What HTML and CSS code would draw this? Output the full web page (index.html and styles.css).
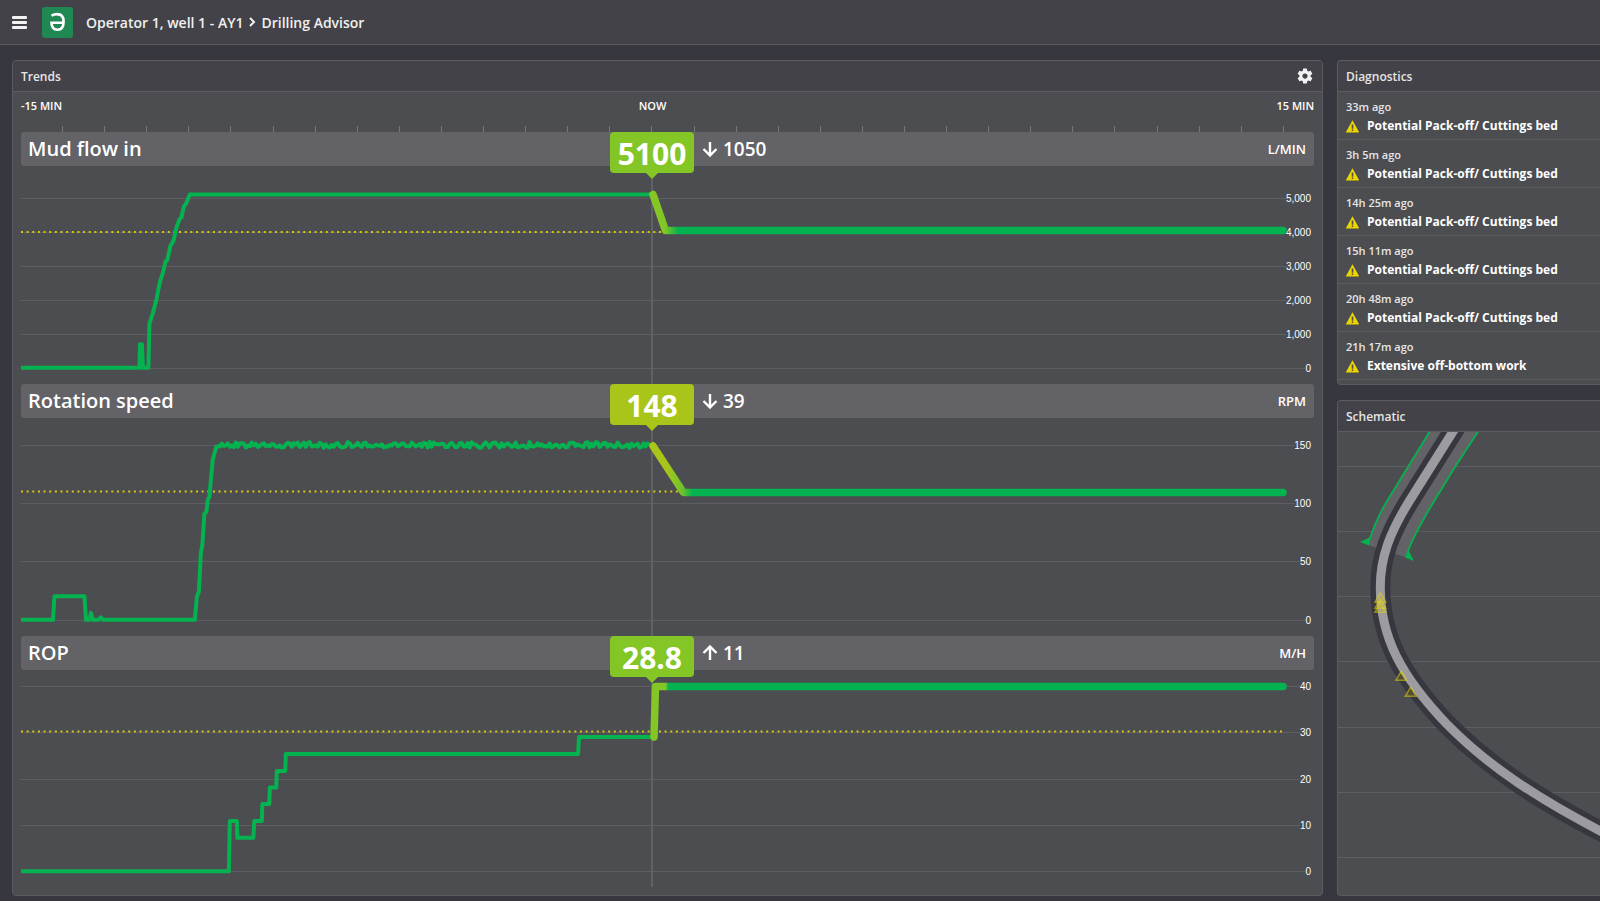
FILE: index.html
```html
<!DOCTYPE html>
<html lang="en">
<head>
<meta charset="utf-8">
<title>Drilling Advisor</title>
<link rel="stylesheet" href="styles.css">
</head>
<body>
<header class="topbar">
  <button class="menu" type="button" aria-label="Menu"><span></span><span></span><span></span></button>
  <svg class="logo" viewBox="0 0 31 31" aria-hidden="true">
    <rect width="31" height="31" rx="3"/>
    <path d="M9.500 8.600C11.500 7.500 13 7.100 15 7.100C19.300 7.100 21.600 9.900 21.600 14.500C21.600 19.900 19.400 22.700 15.400 22.700C11.600 22.700 9.500 20.300 9.500 15.700H21.500"/>
  </svg>
  <nav class="crumbs" aria-label="Breadcrumb">
    <span>Operator 1, well 1 - AY1</span>
    <svg class="chevron" viewBox="0 0 8 10" aria-hidden="true"><path d="M2 1L6 5L2 9"/></svg>
    <span>Drilling Advisor</span>
  </nav>
</header>
<main class="board">
  <section class="panel trends">
    <div class="panel-head">
      <h2>Trends</h2>
      <button class="gear" type="button" aria-label="Settings">
        <svg viewBox="0 0 24 24"><path d="M19.430 12.980c.04-.32.07-.64.07-.98s-.03-.66-.07-.98l2.110-1.650c.19-.15.24-.42.12-.64l-2-3.460c-.12-.22-.39-.3-.61-.22l-2.490 1c-.52-.4-1.080-.73-1.690-.98l-.38-2.650C14.460 2.180 14.250 2 14 2h-4c-.25 0-.46.18-.49.42l-.38 2.650c-.61.25-1.170.59-1.690.98l-2.490-1c-.23-.09-.49 0-.61.22l-2 3.460c-.13.22-.07.49.12.64l2.110 1.650c-.04.32-.07.65-.07.98s.03.66.07.98l-2.110 1.650c-.19.15-.24.42-.12.64l2 3.460c.12.22.39.3.61.22l2.490-1c.52.4 1.080.73 1.690.98l.38 2.650c.03.24.24.42.49.42h4c.25 0 .46-.18.49-.42l.38-2.650c.61-.25 1.170-.59 1.690-.98l2.490 1c.23.09.49 0 .61-.22l2-3.460c.12-.22.07-.49-.12-.64l-2.110-1.650zM12 15.500c-1.930 0-3.500-1.570-3.500-3.500s1.570-3.500 3.500-3.500 3.500 1.570 3.500 3.500-1.570 3.500-3.500 3.500z"/></svg>
      </button>
    </div>
    <div class="trends-body">
      <div class="timeline">
        <div class="time-labels"><span>-15 MIN</span><span class="now">NOW</span><span class="end">15 MIN</span></div>
        <div class="time-ticks" id="ticks"></div>
      </div>

      <section class="chart">
        <div class="bar">
          <h3>Mud flow in</h3>
          <div class="value lime">5100</div>
          <div class="delta"><svg viewBox="0 0 16 16" aria-hidden="true"><path d="M8 1V14M1.500 8L8 14.500L14.500 8"/></svg>1050</div>
          <div class="unit">L/MIN</div>
        </div>
        <div class="plot">
          <div class="grid grid-flow">
            <div><i></i>5,000</div><div><i></i>4,000</div><div><i></i>3,000</div><div><i></i>2,000</div><div><i></i>1,000</div><div><i></i>0</div>
          </div>
          <svg class="series" viewBox="0 0 1294 218" preserveAspectRatio="none">
            <defs><linearGradient id="g1" gradientUnits="userSpaceOnUse" x1="644" y1="0" x2="658" y2="0"><stop offset="0" stop-color="#84c626"/><stop offset="1" stop-color="#04b250"/></linearGradient></defs>
            <path class="nowline" d="M631.500 0V218"/>
            <path class="limit" d="M0 66H1263"/>
            <path class="past" d="M0 202H118.500L119 178.500H121L122 202H127.500L128.500 158L132 147L135.500 134L139 116L142 107L144.500 96L146.500 94L149.500 80L152.500 75L155.500 62L158.500 53.500L160.500 51.500L163 40.500L165 38L169 28.500H631"/>
            <path class="future" stroke="url(#g1)" d="M632.500 28.500L645 64.500H1263"/>
          </svg>
        </div>
      </section>

      <section class="chart">
        <div class="bar">
          <h3>Rotation speed</h3>
          <div class="value olive">148</div>
          <div class="delta"><svg viewBox="0 0 16 16" aria-hidden="true"><path d="M8 1V14M1.500 8L8 14.500L14.500 8"/></svg>39</div>
          <div class="unit">RPM</div>
        </div>
        <div class="plot">
          <div class="grid grid-rotation">
            <div><i></i>150</div><div><i></i>100</div><div><i></i>50</div><div><i></i>0</div>
          </div>
          <svg class="series" viewBox="0 0 1294 218" preserveAspectRatio="none">
            <defs><linearGradient id="g2" gradientUnits="userSpaceOnUse" x1="632" y1="0" x2="672" y2="0"><stop offset=".35" stop-color="#a9c51a"/><stop offset=".6" stop-color="#84c626"/><stop offset=".75" stop-color="#6cc22e"/><stop offset="1" stop-color="#04b250"/></linearGradient></defs>
            <path class="nowline" d="M631.500 0V218"/>
            <path class="limit" d="M0 73.500H1263"/>
            <path class="past" d="M0 202H32L33.500 178.500H63.500L65 202H68.500L70 195L72 202H78L80 199.500L82 202H174L176 179L178 174L180 135L181.500 127L183.500 96L185.500 94L187 82L188.500 79L190.500 57L192 41L194 34L196 27"/>
            <path class="past" id="jitter"/>
            <path class="future" stroke="url(#g2)" d="M632.500 28L663 74.500H1263"/>
          </svg>
        </div>
      </section>

      <section class="chart">
        <div class="bar">
          <h3>ROP</h3>
          <div class="value lime">28.8</div>
          <div class="delta"><svg viewBox="0 0 16 16" aria-hidden="true"><path d="M8 15V2M1.500 8L8 1.500L14.500 8"/></svg>11</div>
          <div class="unit">M/H</div>
        </div>
        <div class="plot">
          <div class="grid grid-rop">
            <div><i></i>40</div><div><i></i>30</div><div><i></i>20</div><div><i></i>10</div><div><i></i>0</div>
          </div>
          <svg class="series" viewBox="0 0 1294 218" preserveAspectRatio="none">
            <defs><linearGradient id="g3" gradientUnits="userSpaceOnUse" x1="645" y1="0" x2="648" y2="0"><stop offset="0" stop-color="#84c626"/><stop offset="1" stop-color="#04b250"/></linearGradient></defs>
            <path class="nowline" d="M631.500 0V218"/>
            <path class="limit" d="M0 61.500H1263"/>
            <path class="past" d="M0 201.500H208L209 151H216L216.500 168H232.500L233.500 151H241L241.500 134H248.500L249 117.500H255.500L256 101H264.500L265 84H557.500L558.500 67H631"/>
            <path class="future" stroke="url(#g3)" d="M633.500 67L635 16.500H1263"/>
          </svg>
        </div>
      </section>
    </div>
  </section>

  <aside class="side">
    <section class="panel">
      <div class="panel-head"><h2>Diagnostics</h2></div>
      <ul class="events">
        <li><time>33m ago</time><p><svg viewBox="0 0 13 13"><use href="#warn"/></svg>Potential Pack-off/ Cuttings bed</p></li>
        <li><time>3h 5m ago</time><p><svg viewBox="0 0 13 13"><use href="#warn"/></svg>Potential Pack-off/ Cuttings bed</p></li>
        <li><time>14h 25m ago</time><p><svg viewBox="0 0 13 13"><use href="#warn"/></svg>Potential Pack-off/ Cuttings bed</p></li>
        <li><time>15h 11m ago</time><p><svg viewBox="0 0 13 13"><use href="#warn"/></svg>Potential Pack-off/ Cuttings bed</p></li>
        <li><time>20h 48m ago</time><p><svg viewBox="0 0 13 13"><use href="#warn"/></svg>Potential Pack-off/ Cuttings bed</p></li>
        <li><time>21h 17m ago</time><p><svg viewBox="0 0 13 13"><use href="#warn"/></svg>Extensive off-bottom work</p></li>
      </ul>
    </section>
    <section class="panel schematic">
      <div class="panel-head"><h2>Schematic</h2></div>
      <svg class="well" role="img" aria-label="Well path">
        <defs>
          <g id="warn"><path fill="#ecd602" d="M6.500 .3L13 12V12.600H0V12Z"/><path fill="#4c4d51" d="M5.700 4.500H7.300V8.700H5.700ZM5.700 9.500H7.300V11H5.700Z"/></g>
          <path id="mark" d="M0 1L5.400 10.200H-5.400Z"/>
        </defs>
        <path class="depth" d="M0 34.500H2000M0 99.500H2000M0 164.500H2000M0 229.500H2000M0 295.500H2000M0 360.500H2000M0 425.500H2000"/>
        <path class="casing" d="M91.500 0L70 35L49 69C39 85 35 96 30.500 113L68 125.500C72 113 77 102 92 76L117 35L140 0Z"/>
        <path class="steel" d="M92 -1L70 35L49 69C40 84 36 94 31 109M140.500 -1L117 35L92 76C78 100 73 110 69 122"/>
        <path class="foot" d="M32.500 105L22 110L31 113.500ZM70.500 118L76 129L67 125.500Z"/>
        <path class="hole" d="M118.500 -6L72 68C52 100 42.300 125 42.300 155C42.300 205 63 244 108.700 292C150 334 200 367 270 403"/>
        <path class="pipe" d="M118.500 -6L72 68C52 100 42.300 125 42.300 155C42.300 205 63 244 108.700 292C150 334 200 367 270 403"/>
        <g class="marks">
          <use href="#mark" x="42.300" y="160"/><use href="#mark" x="42.300" y="166"/><use href="#mark" x="42.300" y="170"/>
          <use href="#mark" x="63.300" y="238"/><use href="#mark" x="72.700" y="254"/>
        </g>
      </svg>
    </section>
  </aside>
</main>
<script src="script.js"></script>
</body>
</html>
```
FILE: script.js
```js
// One tick per minute on the timeline.
document.getElementById('ticks').innerHTML = '<span></span>'.repeat(30);

// Measured rotation speed wobbles around 150 rpm.
let seed = 7;
let d = 'M196 27';
for (let x = 197; x < 631; x += 2) {
  seed = (seed * 16807) % 2147483647;
  d += 'L' + x + ' ' + (24 + (seed % 1000) / 1000 * 6).toFixed(1);
}
document.getElementById('jitter').setAttribute('d', d);
```
FILE: styles.css
```css
* { box-sizing: border-box; }
body {
  margin: 0;
  min-height: 100vh;
  display: flex;
  flex-direction: column;
  background: #37373f;
  color: #fff;
  font-family: "Open Sans", "Noto Sans", sans-serif;
  font-weight: 600;
  overflow-x: hidden;
}
h2, h3, p, ul { margin: 0; padding: 0; font-weight: 600; }
button { border: 0; padding: 0; background: none; color: inherit; cursor: pointer; }

.topbar {
  display: flex;
  align-items: center;
  height: 45px;
  padding: 0 12px;
  background: #424248;
  border-bottom: 1px solid #5b5b60;
}
.menu { display: flex; flex-direction: column; gap: 2px; width: 15px; }
.menu span { height: 3px; background: #f2f2f2; border-radius: 1px; }
.logo { width: 31px; height: 31px; margin: 0 13px 0 15px; }
.logo rect { fill: #1f8853; }
.logo path { fill: none; stroke: #fff; stroke-width: 2.6; }
.crumbs { display: flex; align-items: center; font-size: 14px; color: #f0f0f0; }
.chevron { width: 8px; height: 10px; margin: 0 5px; }
.chevron path { fill: none; stroke: #f0f0f0; stroke-width: 2; }

.board {
  flex: 1;
  display: grid;
  grid-template-columns: minmax(0, 1fr) 263px;
  gap: 14px;
  padding: 15px 0 6px 12px;
}
.panel {
  display: flex;
  flex-direction: column;
  background: #4c4d51;
  border: 1px solid #5b5b60;
  border-radius: 4px;
  overflow: hidden;
}
.panel-head {
  display: flex;
  align-items: center;
  justify-content: space-between;
  height: 31px;
  padding: 0 8px;
  background: #424248;
  border-bottom: 1px solid #5b5b60;
}
.panel-head h2 { padding-top: 2px; font-size: 12px; line-height: 16px; color: #e6e6e6; }
.gear, .gear svg { display: block; width: 18px; height: 18px; }
.gear path { fill: #f2f2f2; }

.trends-body { flex: 1; display: flex; flex-direction: column; padding: 0 8px 8px; }
.timeline { height: 40px; display: flex; flex-direction: column; justify-content: space-between; }
.time-labels {
  display: grid;
  grid-template-columns: 1fr 84px 1fr 30px;
  padding-top: 6px;
  font-size: 11px;
  line-height: 16px;
}
.now { text-align: center; }
.end { grid-column: 3 / 5; text-align: right; }
.time-ticks { display: flex; height: 6px; padding-right: 30px; }
.time-ticks span { flex: 1; border-right: 1px solid #77777b; }

.chart { flex: 1; display: flex; flex-direction: column; }
.bar {
  display: grid;
  grid-template: 34px / 1fr 84px 1fr 31px;
  align-items: center;
  height: 34px;
  background: #636267;
  border-radius: 3px;
}
.bar > * { grid-row: 1; }
.bar h3 { grid-column: 1; padding-left: 7px; font-size: 20px; line-height: 28px; }
.value {
  grid-column: 2;
  align-self: start;
  position: relative;
  z-index: 1;
  height: 41px;
  border-radius: 4px;
  font-size: 30px;
  font-weight: 700;
  line-height: 44px;
  text-align: center;
}
.value::after {
  content: "";
  position: absolute;
  top: 100%;
  left: 50%;
  margin-left: -6px;
  border: 6px solid transparent;
  border-top-color: inherit;
  border-bottom: 0;
}
.lime { background: #84c626; border-color: #84c626; }
.olive { background: #a9c51a; border-color: #a9c51a; }
.delta { grid-column: 3; display: flex; align-items: center; gap: 5px; padding-left: 8px; font-size: 19px; line-height: 28px; }
.delta svg { width: 16px; height: 16px; }
.delta path { fill: none; stroke: #fff; stroke-width: 2.4; }
.unit { grid-column: 3 / 5; justify-self: end; padding-right: 8px; font-size: 13px; }

.plot { flex: 1; display: grid; min-height: 0; }
.plot > * { grid-area: 1 / 1; min-height: 0; }
.grid { display: flex; flex-direction: column; justify-content: space-between; padding: 0 3px 15px 0; font: 500 10px/1px "Liberation Sans", sans-serif; color: #fff; }
.grid div { display: flex; align-items: center; height: 1px; }
.grid i { flex: 1; height: 1px; background: #5d5d62; }
.grid-flow { padding-top: 32px; }
.grid-rotation { padding-top: 27px; }
.grid-rop { padding-top: 16px; }
.series { display: block; width: 100%; height: 100%; }
.series path { fill: none; }
.nowline { stroke: #68686d; stroke-width: 1.5; }
.limit { stroke: #dcc808; stroke-width: 2; stroke-dasharray: 2 3.650; }
.past { stroke: #04b250; stroke-width: 4; stroke-linejoin: round; }
.future { stroke-width: 7.500; stroke-linecap: round; stroke-linejoin: round; }

.side { display: flex; flex-direction: column; gap: 15px; min-width: 0; }
.side .panel { border-right: 0; border-top-right-radius: 0; border-bottom-right-radius: 0; }
.events { list-style: none; padding-bottom: 4px; }
.events li { height: 48px; padding: 7px 8px 0; border-bottom: 1px solid #5b5b60; }
.events time { display: block; font-size: 11px; line-height: 16px; color: #e6e6e6; }
.events p { display: flex; align-items: center; gap: 8px; font-size: 12px; line-height: 22px; font-weight: 700; white-space: nowrap; }
.events svg { width: 13px; height: 13px; }
.schematic { flex: 1; }
.well { flex: 1; display: block; width: 100%; min-height: 0; }
.depth { stroke: #5d5d62; }
.casing { fill: #636267; }
.steel { fill: none; stroke: #04b250; stroke-width: 1.8; }
.foot { fill: #04b250; }
.hole { fill: none; stroke: #37373f; stroke-width: 20; }
.pipe { fill: none; stroke: #9c9ba0; stroke-width: 9; }
.marks { fill: #ecd602; fill-opacity: .15; stroke: #ecd602; stroke-opacity: .5; stroke-width: 1.5; }
```
